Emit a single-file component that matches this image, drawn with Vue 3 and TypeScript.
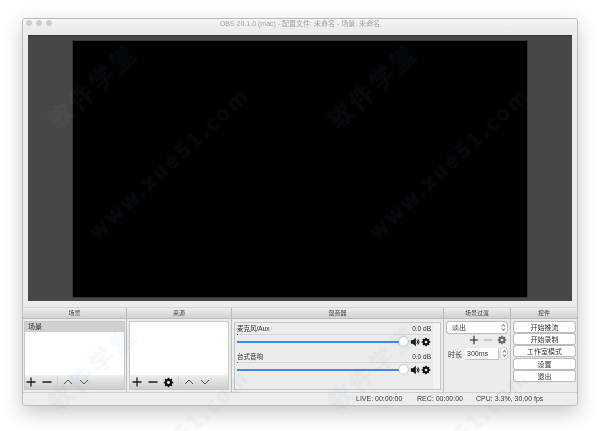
<script setup lang="ts">
const marks = [
  { t: '软件学堂', x: 92, y: 85, s: 24, ls: 4 },
  { t: '软件学堂', x: 372, y: 85, s: 24, ls: 4 },
  { t: 'www.xue51.com', x: 168, y: 162, s: 21, ls: 3 },
  { t: 'www.xue51.com', x: 448, y: 162, s: 21, ls: 3 },
  { t: '软件学堂', x: 92, y: 367, s: 24, ls: 4 },
  { t: '软件学堂', x: 372, y: 367, s: 24, ls: 4 },
  { t: 'www.xue51.com', x: 168, y: 444, s: 21, ls: 3 },
  { t: 'www.xue51.com', x: 448, y: 444, s: 21, ls: 3 },
]
const markStyle = (m: { x: number; y: number; s: number; ls: number }) => ({
  left: m.x + 'px',
  top: m.y + 'px',
  fontSize: m.s + 'px',
  letterSpacing: m.ls + 'px',
})
const mixers = ['麦克风/Aux', '台式音响']
const buttons = ['开始推流', '开始录制', '工作室模式', '设置', '退出']
</script>

<template>
  <div class="page">
    <div class="window">
      <div class="titlebar">
        <div class="lights"><i></i><i></i><i></i></div>
        <div class="title">OBS 20.1.0 (mac) - 配置文件: 未命名 - 场景: 未命名</div>
      </div>
      <div class="body">
        <div class="preview"><div class="screen"></div></div>
        <div class="docks">
          <section class="dock scenes">
            <header>场景</header>
            <div class="listbox">
              <div class="list"><div class="row">场景</div></div>
              <div class="toolbar">
                <svg class="ic" viewBox="0 0 12 12"><path d="M6 1.500v9M1.500 6h9" /></svg>
                <svg class="ic" viewBox="0 0 12 12"><path d="M1.500 6h9" /></svg>
                <span class="sep"></span>
                <svg class="ic thin" viewBox="0 0 12 12"><path d="M2 8l4-4 4 4" /></svg>
                <svg class="ic thin" viewBox="0 0 12 12"><path d="M2 4l4 4 4-4" /></svg>
              </div>
            </div>
          </section>
          <section class="dock sources">
            <header>来源</header>
            <div class="listbox">
              <div class="list"></div>
              <div class="toolbar">
                <svg class="ic" viewBox="0 0 12 12"><path d="M6 1.500v9M1.500 6h9" /></svg>
                <svg class="ic" viewBox="0 0 12 12"><path d="M1.500 6h9" /></svg>
                <svg class="gear big" viewBox="0 0 12 12"><circle cx="6" cy="6" r="3.3" /><path d="M6 .8v10.4M.8 6h10.4M2.3 2.3l7.4 7.4M9.7 2.3l-7.4 7.4" /><circle class="hole" cx="6" cy="6" r="1.6" /></svg>
                <span class="sep"></span>
                <svg class="ic thin" viewBox="0 0 12 12"><path d="M2 8l4-4 4 4" /></svg>
                <svg class="ic thin" viewBox="0 0 12 12"><path d="M2 4l4 4 4-4" /></svg>
              </div>
            </div>
          </section>
          <section class="dock mixer">
            <header>混音器</header>
            <div class="mixbox">
              <div class="tracks">
                <div v-for="m in mixers" :key="m" class="track">
                  <div class="trackhead"><span>{{ m }}</span><span>0.0 dB</span></div>
                  <div class="meter"></div>
                  <div class="controls">
                    <div class="slider"><span class="knob"></span></div>
                    <svg class="speaker" viewBox="0 0 12 12"><path d="M1 4h2.500L7 1v10L3.500 8H1z" /><path class="wave" d="M8.300 4a3 3 0 010 4M9.700 2.800a5 5 0 010 6.400" /></svg>
                    <svg class="gear" viewBox="0 0 12 12"><circle cx="6" cy="6" r="3.3" /><path d="M6 .8v10.400M.8 6h10.400M2.300 2.300l7.400 7.400M9.700 2.300l-7.400 7.400" /><circle class="hole" cx="6" cy="6" r="1.600" /></svg>
                  </div>
                </div>
              </div>
              <div class="scrollgutter"></div>
            </div>
          </section>
          <section class="dock transitions">
            <header>场景过渡</header>
            <div class="transbody">
              <div class="select">
                <span>淡出</span>
                <svg class="updown" viewBox="0 0 5 9"><path d="M1 3.500l1.500-2 1.500 2M1 5.500l1.500 2 1.500-2" /></svg>
              </div>
              <div class="transtools">
                <svg class="ic" viewBox="0 0 12 12"><path d="M6 1v10M1 6h10" /></svg>
                <svg class="ic dim" viewBox="0 0 12 12"><path d="M1 6h10" /></svg>
                <svg class="gear dimgear" viewBox="0 0 12 12"><circle cx="6" cy="6" r="3.300" /><path d="M6 .8v10.400M.8 6h10.400M2.300 2.300l7.400 7.400M9.700 2.300l-7.400 7.400" /><circle class="hole" cx="6" cy="6" r="1.600" /></svg>
              </div>
              <div class="duration">
                <span>时长</span>
                <div class="input">300ms</div>
                <div class="stepper">
                  <svg class="updown" viewBox="0 0 5 9"><path d="M1 3.500l1.500-2 1.500 2M1 5.500l1.500 2 1.500-2" /></svg>
                </div>
              </div>
            </div>
          </section>
          <section class="dock controlsdock">
            <header>控件</header>
            <div class="buttons">
              <button v-for="b in buttons" :key="b">{{ b }}</button>
            </div>
          </section>
        </div>
        <footer class="status">
          <span class="live">LIVE: 00:00:00</span>
          <span class="rec">REC: 00:00:00</span>
          <span class="cpu">CPU: 3.3%, 30.00 fps</span>
        </footer>
      </div>
    </div>
    <div class="marks">
      <span v-for="(m, i) in marks" :key="i" class="mark" :style="markStyle(m)">{{ m.t }}</span>
    </div>
  </div>
</template>

<style>
html, body { margin: 0; background: #fff; }
</style>

<style scoped>
.page {
  position: relative;
  width: 600px;
  height: 431px;
  overflow: hidden;
  background: #fff;
  font-family: "Liberation Sans", "Noto Sans CJK SC", sans-serif;
  padding: 18px 22px 25px;
  box-sizing: border-box;
  filter: blur(0.3px);
}
.window {
  height: 388px;
  box-sizing: border-box;
  display: flex;
  flex-direction: column;
  border: 1px solid #bcbcbc;
  border-radius: 3px;
  background: #ededed;
  box-shadow: 0 7px 20px rgba(0, 0, 0, 0.22);
  overflow: hidden;
}
.titlebar {
  height: 9px;
  flex: none;
  position: relative;
  background: linear-gradient(#f6f6f6, #ececec);
  display: flex;
  align-items: center;
  justify-content: center;
}
.lights { position: absolute; left: 3px; top: 1px; display: flex; gap: 4px; }
.lights i { width: 6px; height: 6px; border-radius: 50%; background: #cdcdcd; display: block; }
.title { font-size: 7px; color: #a2a2a2; line-height: 9px; white-space: nowrap; }
.body { flex: 1; display: flex; flex-direction: column; min-height: 0; background: #ececec; }
.preview {
  margin: 7px 5px 0;
  height: 266px;
  flex: none;
  background: #474747;
  border-top: 1px solid #333;
  box-sizing: border-box;
  display: flex;
  justify-content: center;
  align-items: center;
}
.screen { width: 454px; height: 256px; background: #000; outline: 1px solid #363636; }
.docks {
  flex: 1;
  display: grid;
  grid-template-columns: 104px 105px 212px 67px 1fr;
  margin-top: 6px;
  border-top: 1px solid #d5d5d5;
  min-height: 0;
}
.dock { display: flex; flex-direction: column; border-right: 1px solid #bcbcbc; min-width: 0; }
.dock:last-child { border-right: 0; }
.dock header {
  height: 11px;
  box-sizing: border-box;
  flex: none;
  background: linear-gradient(#ececec, #d2d2d2);
  border-bottom: 1px solid #bdbdbd;
  font-size: 6px;
  line-height: 10px;
  text-align: center;
  color: #444;
}
.listbox {
  margin: 2px 2px 2px 2px;
  flex: 1;
  display: flex;
  flex-direction: column;
  border: 1px solid #c8c8c8;
  min-height: 0;
}
.scenes .listbox { margin-left: 1px; margin-right: 1px; }
.list { flex: 1; background: #fff; min-height: 0; }
.row { height: 10px; line-height: 10px; background: #d0d0d0; font-size: 7px; color: #333; padding-left: 3px; }
.toolbar {
  height: 14px;
  flex: none;
  display: flex;
  align-items: center;
  gap: 4px;
  background: linear-gradient(#efefef, #cdcdcd);
}
.sources .toolbar { padding-left: 1px; }
.ic { width: 12px; height: 12px; fill: none; stroke: #1c1c1c; stroke-width: 1.300; flex: none; }
.ic.thin { stroke: #444; stroke-width: .900; }
.ic.dim { stroke: #aaa; }
.sep { width: 1px; height: 12px; background: #d2d2d2; flex: none; }
.gear { width: 10px; height: 10px; fill: #111; stroke: #111; stroke-width: 1.700; flex: none; }
.gear.big { width: 11px; height: 11px; }
.gear .hole { fill: #eee; stroke: none; }
.gear.dimgear { fill: #666; stroke: #666; }
.mixbox {
  margin: 3px 2px 2px 2px;
  flex: 1;
  display: flex;
  border: 1px solid #c6c6c6;
  background: #ececec;
  min-height: 0;
}
.tracks { flex: 1; padding: 1px 2px 0 2px; min-width: 0; }
.scrollgutter { width: 7px; flex: none; background: #f3f3f3; }
.track { height: 28px; }
.trackhead { display: flex; justify-content: space-between; font-size: 6.500px; line-height: 9px; color: #333; height: 9px; margin-bottom: 1px; }
.meter { height: 1px; background: #d6d6d6; border-left: 1px solid #555; margin-bottom: 2px; }
.controls { display: flex; align-items: center; gap: 1px; height: 10px; }
.slider { flex: 1; height: 2px; background: #3d86ea; position: relative; margin-right: 1px; }
.knob {
  position: absolute;
  right: 0;
  top: -4px;
  width: 9px;
  height: 9px;
  border-radius: 50%;
  background: #fff;
  box-shadow: 0 0 1px 0.5px #aaa;
}
.speaker { width: 10px; height: 10px; fill: #111; flex: none; }
.speaker .wave { fill: none; stroke: #111; stroke-width: 1.200; }
.transbody { padding: 3px 3px; display: flex; flex-direction: column; }
.select {
  height: 11px;
  border-radius: 3px;
  background: #fff;
  box-shadow: 0 0 1px .5px #b9b9b9;
  font-size: 7px;
  line-height: 11px;
  padding: 0 1px 0 5px;
  display: flex;
  justify-content: space-between;
  align-items: center;
  color: #333;
}
.updown { width: 5px; height: 9px; fill: none; stroke: #333; stroke-width: .800; display: block; }
.transtools { display: flex; justify-content: flex-end; gap: 4px; margin-top: 1px; align-items: center; height: 12px; }
.transtools .ic { width: 10px; height: 10px; }
.duration { display: flex; align-items: center; font-size: 7px; color: #333; margin-top: 2px; gap: 3px; padding-left: 1px; }
.input { width: 33px; height: 11px; background: #fff; line-height: 11px; font-size: 7px; padding-left: 2px; box-shadow: 0 0 1px .5px #c0c0c0; box-sizing: border-box; }
.stepper { width: 6px; height: 11px; background: #fff; border-radius: 3px; box-shadow: 0 0 1px .5px #b9b9b9; display: flex; justify-content: center; align-items: center; }
.buttons { display: flex; flex-direction: column; gap: 2.400px; padding: 2.500px 2px 0 3px; }
button {
  height: 10px;
  padding: 0;
  border: 0;
  border-radius: 2.500px;
  background: #fff;
  box-shadow: 0 0 1px .5px #b9b9b9;
  font: 7px/10px "Noto Sans CJK SC", sans-serif;
  color: #333;
}
.status {
  height: 13px;
  box-sizing: border-box;
  flex: none;
  border-top: 1px solid #cfcfcf;
  font-size: 7px;
  line-height: 12px;
  color: #3a3a3a;
  display: flex;
  background: #ededed;
  padding-left: 333px;
}
.live { width: 61px; }
.rec { width: 59px; }
.marks { position: absolute; inset: 0; pointer-events: none; }
.mark {
  position: absolute;
  transform: translate(-50%, -50%) rotate(-43deg);
  white-space: nowrap;
  font-weight: 700;
  font-family: "Noto Sans CJK SC", "Liberation Sans", sans-serif;
  color: #5a9fd8;
  -webkit-text-stroke: 1px #5a9fd8;
  opacity: 0.055;
}
</style>
